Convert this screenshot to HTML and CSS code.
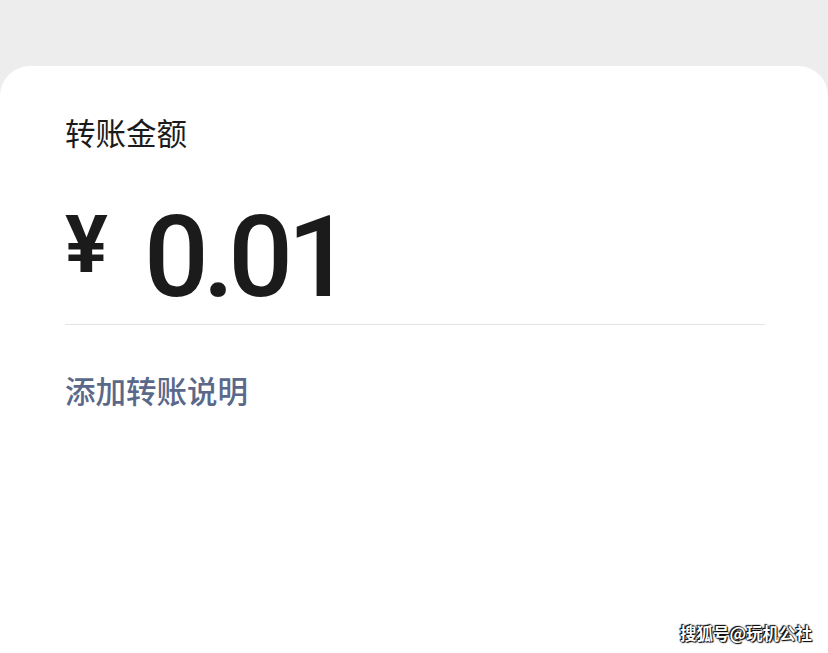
FILE: index.html
```html
<!DOCTYPE html>
<html lang="zh">
<head>
<meta charset="utf-8">
<link rel="stylesheet" href="styles.css">
</head>
<body>
<div class="page">
  <div class="top"></div>
  <div class="card">
    <div class="label">转账金额</div>
    <div class="amount">
      <span class="yen">¥</span>
      <span class="num">0.01</span>
    </div>
    <div class="divider"></div>
    <div class="note">添加转账说明</div>
  </div>
  <div class="watermark">搜狐号@玩机公社</div>
</div>
</body>
</html>
```
FILE: styles.css
```css
html, body {
  margin: 0;
  padding: 0;
  background: #ededed;
}
.page {
  position: relative;
  width: 828px;
  height: 653px;
  overflow: hidden;
  display: flex;
  flex-direction: column;
  font-family: "Noto Sans CJK SC", "Noto Sans", sans-serif;
}
.top {
  height: 66px;
  flex: none;
}
.card {
  flex: 1;
  background: #ffffff;
  border-radius: 30px 30px 0 0;
  padding: 46px 63px 0 65px;
}
.label {
  font-size: 30.5px;
  line-height: 40px;
  color: #1b1b1b;
}
.amount {
  display: flex;
  align-items: flex-start;
  height: 126px;
  margin-top: 46px;
}
.yen {
  font-family: Roboto, "Liberation Sans", sans-serif;
  font-weight: 700;
  font-size: 80px;
  line-height: 1;
  color: #1b1b1b;
  margin-top: 7px;
  margin-left: 0;
}
.num {
  font-family: Roboto, "Liberation Sans", sans-serif;
  font-weight: 500;
  font-size: 114px;
  line-height: 1;
  letter-spacing: -6px;
  color: #1b1b1b;
  margin-left: 36px;
  margin-top: 2px;
}
.divider {
  height: 1px;
  background: #e3e3e3;
}
.note {
  margin-top: 45px;
  font-size: 30.5px;
  font-weight: 500;
  line-height: 40px;
  color: #5a6889;
}
.watermark {
  position: absolute;
  right: 16px;
  bottom: 8px;
  font-size: 16.5px;
  font-weight: 700;
  color: #ffffff;
  text-shadow: 0 0 2px #000, 0 0 1px #000, 1px 1px 1px #000, -1px -1px 1px #000;
}
```
